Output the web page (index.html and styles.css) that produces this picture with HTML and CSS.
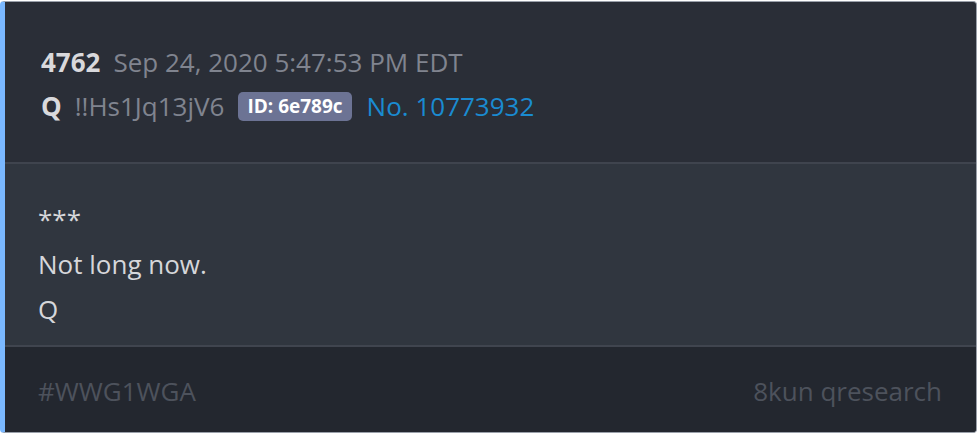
FILE: index.html
```html
<!DOCTYPE html>
<html>
<head>
<meta charset="utf-8">
<link rel="stylesheet" href="styles.css">
</head>
<body>
<div class="card">
  <div class="head">
    <div class="row">
      <span class="num">4762</span>
      <span class="muted">Sep 24, 2020 5:47:53 PM EDT</span>
    </div>
    <div class="row">
      <span class="num">Q</span>
      <span class="muted">!!Hs1Jq13jV6</span>
      <span class="badge">ID: 6e789c</span>
      <span class="link">No. 10773932</span>
    </div>
  </div>
  <div class="body">
    <p>***</p>
    <p>Not long now.</p>
    <p>Q</p>
  </div>
  <div class="foot">
    <span>#WWG1WGA</span>
    <span>8kun qresearch</span>
  </div>
</div>
</body>
</html>
```
FILE: styles.css
```css
html, body {
  margin: 0;
  padding: 0;
  background: #ffffff;
}
body {
  padding: 1px 1px 1px 0;
  font-family: "Open Sans", "Noto Sans", sans-serif;
}
.card {
  height: 430px;
  border: 1px solid #9aa0aa;
  border-left: 5px solid #7ab8ff;
  border-radius: 4px;
  background: #2a2e37;
  display: flex;
  flex-direction: column;
  overflow: hidden;
}
.head {
  height: 162px;
  box-sizing: border-box;
  padding: 42px 0 0 36px;
  border-bottom: 2px solid #3f444e;
  display: flex;
  flex-direction: column;
  gap: 8px;
}
.row {
  display: flex;
  align-items: center;
  gap: 13px;
  font-size: 26px;
  line-height: 36px;
}
.num {
  font-weight: 700;
  color: #d9d9dc;
}
.muted {
  color: #80848f;
}
.badge {
  background: #6c7394;
  color: #ffffff;
  font-weight: 700;
  font-size: 19px;
  line-height: 29px;
  padding: 0 9px;
  border-radius: 5px;
  margin-left: 1px;
}
.link {
  color: #1a8bd1;
  margin-left: 2px;
}
.body {
  height: 183px;
  box-sizing: border-box;
  background: #30363f;
  border-bottom: 2px solid #40454f;
  padding: 33px 0 0 33px;
  font-size: 26px;
  color: #d6d7da;
}
.body p {
  margin: 0;
  line-height: 45px;
}
.foot {
  flex: 1;
  background: #23272f;
  display: flex;
  justify-content: space-between;
  align-items: center;
  padding: 2px 34px 0 33px;
  font-size: 26px;
  color: #4d525c;
}
```
